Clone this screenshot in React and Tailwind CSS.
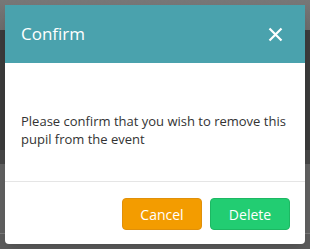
import React from "react";

function Backdrop() {
  return (
    <div className="absolute inset-0 flex flex-col">
      <div className="h-[30px] bg-gradient-to-b from-[#777777] to-[#6c6c6c]"></div>
      <div className="h-[120px] bg-[#3b3b3b]"></div>
      <div className="h-[14px] bg-[#464646]"></div>
      <div className="h-[69px] bg-[#606060]"></div>
      <div className="h-px bg-[#7a7a7a]"></div>
      <div className="flex-1 bg-[#5c5c5c]"></div>
    </div>
  );
}

export default function App() {
  return (
    <div
      className="relative w-[310px] h-[249px] overflow-hidden"
      style={{ fontFamily: '"Open Sans", sans-serif' }}
    >
      <Backdrop />
      <div className="relative p-[5px]">
        <div className="w-[300px] h-[239px] flex flex-col bg-white rounded-b shadow-lg">
          <div className="h-[58px] flex items-center justify-between bg-[#4aa2ad] pl-4 pr-[22px]">
            <h2 className="text-[17px] text-white">Confirm</h2>
            <button className="text-white">
              <svg width="15" height="15" viewBox="0 0 15 15">
                <path
                  d="M1.5 1.5 L13.5 13.5 M13.5 1.5 L1.5 13.5"
                  stroke="white"
                  strokeWidth="2.2"
                />
              </svg>
            </button>
          </div>
          <div className="h-[119px] flex items-center pl-4 pr-2 pt-[16px] border-b border-[#e5e5e5]">
            <p className="text-[13px] leading-[18px] text-[#333333]">
              Please confirm that you wish to remove this pupil from the event
            </p>
          </div>
          <div className="flex-1 flex justify-end items-start gap-2 pt-4 pr-[15px]">
            <button className="w-[80px] h-[32px] rounded-sm bg-[#f39c00] border border-[#e0900a] text-white text-[14px]">
              Cancel
            </button>
            <button className="w-[80px] h-[32px] rounded-sm bg-[#22cd72] border border-[#1db863] text-white text-[14px]">
              Delete
            </button>
          </div>
        </div>
      </div>
    </div>
  );
}
